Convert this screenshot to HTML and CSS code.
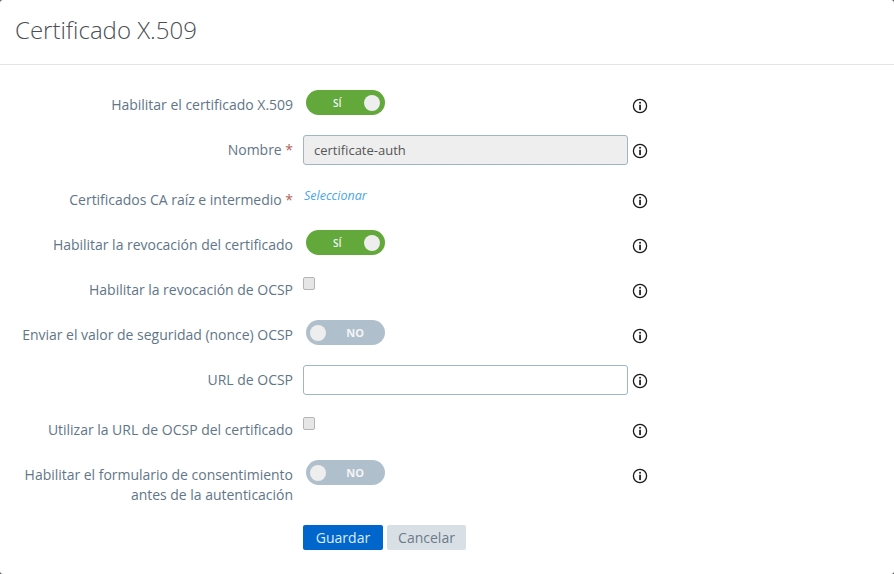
FILE: index.html
```html
<!doctype html>
<html>
    <head>
        <title>Certificado X.509</title>
        <link rel="stylesheet" href="styles.css">
    </head>
    <body>
        <div class="modal">
            <h1 class="modal-title">Certificado X.509</h1>
            <svg width="0" height="0" class="defs">
                <symbol id="info" viewBox="0 0 16 16">
                    <circle cx="8" cy="8" r="6.6" fill="none" stroke="#1a1a1a" stroke-width="1.3"/>
                    <rect x="7.2" y="3.9" width="1.7" height="1.7" fill="#1a1a1a"/>
                    <rect x="7.2" y="6.7" width="1.7" height="5.4" fill="#1a1a1a"/>
                </symbol>
            </svg>
            <form class="form">
                <div class="row">
                    <label class="label">Habilitar el certificado X.509</label>
                    <div class="control"><span class="toggle on"><span class="toggle-text">SÍ</span><span class="knob"></span></span></div>
                    <svg class="info"><use href="#info"/></svg>
                </div>
                <div class="row">
                    <label class="label">Nombre <span class="req">*</span></label>
                    <div class="control"><input class="input" type="text" value="certificate-auth" disabled></div>
                    <svg class="info"><use href="#info"/></svg>
                </div>
                <div class="row tall">
                    <label class="label">Certificados CA raíz e intermedio <span class="req">*</span></label>
                    <div class="control"><a class="link" href="#">Seleccionar</a></div>
                    <svg class="info"><use href="#info"/></svg>
                </div>
                <div class="row">
                    <label class="label">Habilitar la revocación del certificado</label>
                    <div class="control"><span class="toggle on"><span class="toggle-text">SÍ</span><span class="knob"></span></span></div>
                    <svg class="info"><use href="#info"/></svg>
                </div>
                <div class="row">
                    <label class="label">Habilitar la revocación de OCSP</label>
                    <div class="control"><span class="check"></span></div>
                    <svg class="info"><use href="#info"/></svg>
                </div>
                <div class="row">
                    <label class="label">Enviar el valor de seguridad (nonce) OCSP</label>
                    <div class="control"><span class="toggle"><span class="knob"></span><span class="toggle-text">NO</span></span></div>
                    <svg class="info"><use href="#info"/></svg>
                </div>
                <div class="row">
                    <label class="label">URL de OCSP</label>
                    <div class="control"><input class="input" type="text"></div>
                    <svg class="info"><use href="#info"/></svg>
                </div>
                <div class="row tall">
                    <label class="label">Utilizar la URL de OCSP del certificado</label>
                    <div class="control"><span class="check"></span></div>
                    <svg class="info"><use href="#info"/></svg>
                </div>
                <div class="row double">
                    <label class="label">Habilitar el formulario de consentimiento antes de la autenticación</label>
                    <div class="control"><span class="toggle"><span class="knob"></span><span class="toggle-text">NO</span></span></div>
                    <svg class="info"><use href="#info"/></svg>
                </div>
                <div class="actions">
                    <button class="btn primary" type="button">Guardar</button>
                    <button class="btn" type="button">Cancelar</button>
                </div>
            </form>
        </div>
    </body>
</html>
```

FILE: styles.css
```css
* {
    box-sizing: border-box;
    font-family: "Open Sans", sans-serif;
}

html, body {
    height: 100%;
}

body {
    background: #555;
    margin: 0;
    overflow: hidden;
}

.modal {
    background: #fff;
    height: 100%;
    border-radius: 3px;
}

.defs {
    position: absolute;
}

.modal-title {
    margin: 0;
    height: 65px;
    padding: 14px 15px 0;
    border-bottom: 1px solid #e3e6e8;
    font-size: 24px;
    font-weight: 300;
    line-height: 32px;
    color: #4a4f54;
}

.form {
    padding-top: 25px;
}

.row {
    display: flex;
    align-items: flex-start;
    height: 45px;
}

.row.tall {
    height: 50px;
}

.row.double {
    height: 65px;
}

.label {
    width: 293px;
    padding-top: 5px;
    text-align: right;
    font-size: 14px;
    letter-spacing: -0.02px;
    line-height: 20px;
    color: #5f7688;
}

.row.tall .label {
    padding-top: 10px;
}

.req {
    color: #b3615c;
}

.control {
    width: 325px;
    margin-left: 10px;
}

.input {
    display: block;
    width: 100%;
    height: 30px;
    padding: 0 10px;
    border: 1px solid #9fb6c9;
    border-radius: 3px;
    background: #fff;
    font-size: 13px;
    color: #555;
}

.input:disabled {
    background: #eee;
    color: #555;
}

.toggle {
    display: flex;
    align-items: center;
    justify-content: space-between;
    width: 79px;
    height: 25px;
    margin-left: 3px;
    padding: 0 5px 0 4px;
    border-radius: 13px;
    background: #b0bfcc;
}

.toggle.on {
    background: #62a83a;
    padding-left: 27px;
}

.toggle-text {
    font-size: 11px;
    font-weight: 700;
    color: #f2f5f7;
    margin-right: 16px;
}

.toggle.on .toggle-text {
    font-size: 10px;
    font-weight: 600;
    margin-right: 0;
}

.knob {
    width: 16px;
    height: 16px;
    border-radius: 50%;
    background: #eeeeee;
}

.check {
    display: block;
    width: 12px;
    height: 13px;
    margin-top: 2px;
    border: 1px solid #b5b5b5;
    border-radius: 2px;
    background: #e6e6e6;
}

.row.tall .check {
    margin-top: 7px;
}

.link {
    display: block;
    margin: 7px 0 0 1px;
    font-size: 12.5px;
    font-style: italic;
    color: #4aa5e8;
    text-decoration: none;
}

.info {
    width: 16px;
    height: 16px;
    margin: 8px 0 0 4px;
    flex: none;
}

.row.tall .info {
    margin-top: 13px;
}

.actions {
    display: flex;
    gap: 4px;
    padding-left: 303px;
}

.btn {
    height: 25px;
    width: 79px;
    padding: 0;
    border: 0;
    border-radius: 2px;
    background: #d9e0e5;
    font-size: 14px;
    color: #6b7a88;
}

.btn.primary {
    width: 80px;
    background: #0066cc;
    color: #dcecfb;
}
```
